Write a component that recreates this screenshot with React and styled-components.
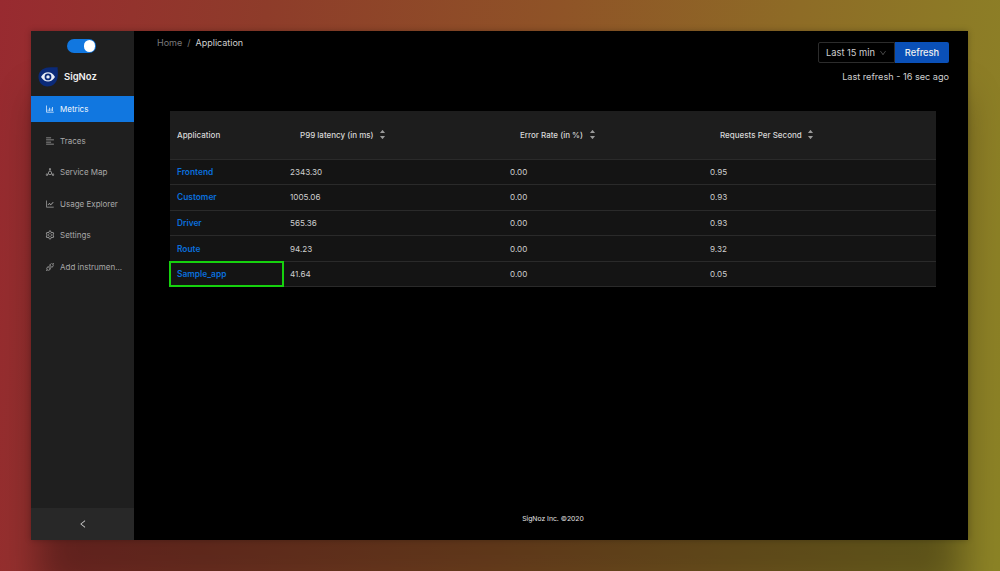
import styled, { createGlobalStyle } from "styled-components";
import {
  AiOutlineBarChart,
  AiOutlineAlignLeft,
  AiOutlineDeploymentUnit,
  AiOutlineLineChart,
  AiOutlineSetting,
  AiOutlineApi,
  AiOutlineLeft,
  AiOutlineDown,
  AiFillCaretUp,
  AiFillCaretDown,
} from "react-icons/ai";

const menu = [
  { label: "Metrics", icon: AiOutlineBarChart, active: true },
  { label: "Traces", icon: AiOutlineAlignLeft },
  { label: "Service Map", icon: AiOutlineDeploymentUnit },
  { label: "Usage Explorer", icon: AiOutlineLineChart },
  { label: "Settings", icon: AiOutlineSetting },
  { label: "Add instrumen...", icon: AiOutlineApi },
];

const rows = [
  { name: "Frontend", latency: "2343.30", error: "0.00", rps: "0.95" },
  { name: "Customer", latency: "1005.06", error: "0.00", rps: "0.93" },
  { name: "Driver", latency: "565.36", error: "0.00", rps: "0.93" },
  { name: "Route", latency: "94.23", error: "0.00", rps: "9.32" },
  { name: "Sample_app", latency: "41.64", error: "0.00", rps: "0.05", marked: true },
];

const SortIcon = () => (
  <Sorter>
    <AiFillCaretUp />
    <AiFillCaretDown />
  </Sorter>
);

const App = () => {
  return (
    <>
      <GlobalStyle />
      <Backdrop>
        <Window>
          <Sidebar>
            <SwitchWrap>
              <Switch>
                <Knob />
              </Switch>
            </SwitchWrap>
            <Brand>
              <Logo>
                <svg viewBox="0 0 20 20" width="20" height="20">
                  <path d="M10 0.5 C14 0 18 0.5 19.5 0 C20 5 20 8 19.5 11 C18.5 16 14.5 19.5 9.5 19.5 C4 19.5 0.5 15 0.5 10 C0.5 4.5 4.5 1 10 0.5 Z" fill="#0b2a78" />
                  <path d="M3 10 C5 6.6 7.4 5.2 10 5.2 C12.6 5.2 15 6.6 17 10 C15 13.2 12.6 14.6 10 14.6 C7.4 14.6 5 13.2 3 10 Z" fill="#e8edf6" />
                  <circle cx="10" cy="9.9" r="3.4" fill="#0b2a78" />
                  <circle cx="10" cy="9.9" r="1.7" fill="#e8edf6" />
                </svg>
              </Logo>
              <BrandName>SigNoz</BrandName>
            </Brand>
            <Menu>
              {menu.map((item) => (
                <MenuItem key={item.label} $active={item.active}>
                  <item.icon />
                  <span>{item.label}</span>
                </MenuItem>
              ))}
            </Menu>
            <Collapse>
              <AiOutlineLeft />
            </Collapse>
          </Sidebar>
          <Main>
            <TopBar>
              <Breadcrumb>
                <Crumb>Home</Crumb>
                <Crumb>/</Crumb>
                <Crumb $current>Application</Crumb>
              </Breadcrumb>
              <Controls>
                <ControlRow>
                  <RangeSelect>
                    Last 15 min
                    <AiOutlineDown />
                  </RangeSelect>
                  <RefreshButton>Refresh</RefreshButton>
                </ControlRow>
                <LastRefresh>Last refresh - 16 sec ago</LastRefresh>
              </Controls>
            </TopBar>
            <Table>
              <HeadRow>
                <HeadCell>Application</HeadCell>
                <HeadCell $indent>P99 latency (in ms) <SortIcon /></HeadCell>
                <HeadCell $indent>Error Rate (in %) <SortIcon /></HeadCell>
                <HeadCell $indent>Requests Per Second <SortIcon /></HeadCell>
              </HeadRow>
              {rows.map((row) => (
                <Row key={row.name}>
                  <NameCell $marked={row.marked}>{row.name}</NameCell>
                  <Cell>{row.latency}</Cell>
                  <Cell>{row.error}</Cell>
                  <Cell>{row.rps}</Cell>
                </Row>
              ))}
            </Table>
            <Footer>SigNoz Inc. ©2020</Footer>
          </Main>
        </Window>
      </Backdrop>
    </>
  );
};

const GlobalStyle = createGlobalStyle`
  html, body {
    margin: 0;
    padding: 0;
    height: 100%;
  }
  body {
    font-family: Inter, "Liberation Sans", sans-serif;
    overflow: hidden;
  }
`;

const Backdrop = styled.div`
  box-sizing: border-box;
  width: 1000px;
  height: 571px;
  padding: 31px 32px 31px 31px;
  overflow: hidden;
  background: linear-gradient(97deg, #982a30 0%, #8e3c2a 25%, #8f5327 52%, #8e6c26 75%, #8c8426 100%);
`;

const Window = styled.div`
  display: flex;
  height: 509px;
  background: #000;
  box-shadow: 0 60px 36px -6px rgba(0, 0, 0, 0.34), 0 0 6px rgba(0, 0, 0, 0.25);
`;

const Sidebar = styled.aside`
  display: flex;
  flex-direction: column;
  width: 103px;
  flex-shrink: 0;
  background: #1f1f1f;
`;

const SwitchWrap = styled.div`
  display: flex;
  justify-content: center;
  padding: 8px 2px 0 0;
`;

const Switch = styled.div`
  display: flex;
  justify-content: flex-end;
  align-items: center;
  box-sizing: border-box;
  width: 29px;
  height: 13.5px;
  padding: 1px;
  border-radius: 7px;
  background: #1177e0;
`;

const Knob = styled.div`
  width: 11.5px;
  height: 11.5px;
  border-radius: 50%;
  background: #fff;
`;

const Brand = styled.div`
  display: flex;
  align-items: center;
  gap: 6px;
  height: 20px;
  margin-top: 14px;
  padding-left: 7px;
`;

const Logo = styled.div`
  display: flex;
  width: 20px;
  height: 20px;
`;

const BrandName = styled.span`
  color: #f0f0f0;
  font-size: 9.5px;
  font-weight: 600;
`;

const Menu = styled.nav`
  display: flex;
  flex-direction: column;
  gap: 5.5px;
  margin-top: 9.5px;
  flex: 1;
`;

const MenuItem = styled.div`
  display: flex;
  align-items: center;
  gap: 5px;
  height: 26px;
  padding-left: 14px;
  font-size: 8px;
  white-space: nowrap;
  color: ${(p) => (p.$active ? "#f2f7fd" : "#a8a8a8")};
  background: ${(p) => (p.$active ? "#1177e0" : "transparent")};

  svg {
    flex-shrink: 0;
    font-size: 10px;
  }
`;

const Collapse = styled.div`
  display: flex;
  align-items: center;
  justify-content: center;
  height: 32px;
  background: #282828;
  color: #d0d0d0;
  font-size: 10px;
`;

const Main = styled.main`
  display: flex;
  flex-direction: column;
  flex: 1;
  min-width: 0;
  padding: 0 32px 0 36px;
`;

const TopBar = styled.div`
  display: flex;
  justify-content: space-between;
  align-items: flex-start;
  height: 79.5px;
  margin-right: -13px;
`;

const Breadcrumb = styled.div`
  display: flex;
  gap: 5px;
  margin: 5px 0 0 -13px;
  font-size: 9px;
  line-height: 14px;
`;

const Crumb = styled.span`
  color: ${(p) => (p.$current ? "#d0d0d0" : "#7a7a7a")};
`;

const Controls = styled.div`
  display: flex;
  flex-direction: column;
  align-items: flex-end;
  padding-top: 11px;
`;

const ControlRow = styled.div`
  display: flex;
  height: 21px;
`;

const RangeSelect = styled.div`
  display: flex;
  align-items: center;
  justify-content: space-between;
  box-sizing: border-box;
  width: 77px;
  padding: 0 7px;
  border: 1px solid #2c2c2c;
  border-radius: 2px 0 0 2px;
  color: #cfcfcf;
  font-size: 9.3px;

  svg {
    color: #555;
    font-size: 8px;
  }
`;

const RefreshButton = styled.div`
  display: flex;
  align-items: center;
  justify-content: center;
  width: 54px;
  border-radius: 0 2px 2px 0;
  background: #0a50b8;
  color: #f0f0f0;
  font-size: 9.3px;
  font-weight: 500;
`;

const LastRefresh = styled.div`
  margin-top: 7px;
  color: #d0d0d0;
  font-size: 9.15px;
  line-height: 14px;
`;

const columns = "113px 220px 200px 233px";

const Table = styled.div`
  display: flex;
  flex-direction: column;
`;

const HeadRow = styled.div`
  display: grid;
  grid-template-columns: ${columns};
  align-items: center;
  box-sizing: border-box;
  height: 49px;
  background: #1d1d1d;
  border-bottom: 1px solid #2a2a2a;
`;

const HeadCell = styled.div`
  display: flex;
  align-items: center;
  gap: 5.5px;
  padding-left: ${(p) => (p.$indent ? "17px" : "7px")};
  color: #d8d8d8;
  font-size: 8px;
  font-weight: 500;
`;

const Sorter = styled.span`
  display: inline-flex;
  flex-direction: column;
  color: #9a9a9a;
  font-size: 7px;
  line-height: 0;

  svg + svg {
    margin-top: -1.5px;
  }
`;

const Row = styled.div`
  display: grid;
  grid-template-columns: ${columns};
  align-items: stretch;
  box-sizing: border-box;
  height: 25.6px;
  background: #141414;
  border-bottom: 1px solid #2a2a2a;
`;

const Cell = styled.div`
  display: flex;
  align-items: center;
  padding-left: 7px;
  color: #cfcfcf;
  font-size: 8.1px;
`;

const NameCell = styled(Cell)`
  color: #0a6fdc;
  font-size: 8.4px;
  font-weight: 600;
  ${(p) => p.$marked && "outline: 2px solid #16d10e; outline-offset: -1px;"}
`;

const Footer = styled.footer`
  margin-top: auto;
  padding-bottom: 16px;
  text-align: center;
  color: #e0e0e0;
  font-size: 6.8px;
  line-height: 10px;
`;

export default App;
